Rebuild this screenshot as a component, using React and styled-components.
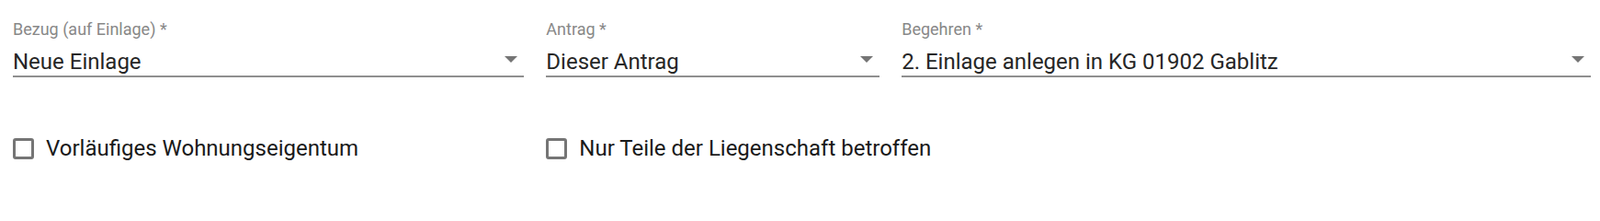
import React from 'react';
import styled, { createGlobalStyle } from 'styled-components';

const GlobalStyle = createGlobalStyle`
  html, body {
    margin: 0;
    padding: 0;
    background: #fff;
  }
  body {
    font-family: Roboto, "Liberation Sans", Arial, sans-serif;
    color: rgba(0, 0, 0, 0.87);
    overflow: hidden;
  }
`;

const Page = styled.div`
  width: 1741px;
  padding-top: 21px;
  box-sizing: border-box;
`;

const Row = styled.div`
  display: flex;
  width: 100%;
  margin-left: -10px;
  margin-top: ${(p) => p.$top || 0}px;
`;

const Cell = styled.div`
  box-sizing: border-box;
  flex: 0 0 ${(p) => (p.$span / 9) * 100}%;
  max-width: ${(p) => (p.$span / 9) * 100}%;
  padding-left: 24px;
`;

const Field = styled.div`
  display: flex;
  flex-direction: column;
`;

const Label = styled.label`
  font-size: 18px;
  line-height: 21px;
  height: 21px;
  color: #888;
  white-space: nowrap;
`;

const SelectBox = styled.div`
  display: flex;
  align-items: flex-start;
  margin-top: 11px;
  height: 29px;
  border-bottom: 2px solid #8f8f8f;
`;

const Value = styled.div`
  flex: 1;
  font-size: 24px;
  line-height: 28px;
  color: #262626;
  white-space: nowrap;
  overflow: hidden;
`;

const Arrow = styled.svg`
  flex: none;
  width: 14px;
  height: 7px;
  margin: 8px 7px 0 0;
  fill: #757575;
`;

const CheckItem = styled.label`
  display: flex;
  align-items: center;
  gap: 13px;
  height: 28px;
  cursor: pointer;
`;

const Box = styled.span`
  flex: none;
  width: 23px;
  height: 23px;
  box-sizing: border-box;
  border: 3px solid #757575;
  border-radius: 3px;
`;

const CheckText = styled.span`
  font-size: 24px;
  line-height: 28px;
  color: #1a1a1a;
  white-space: nowrap;
`;

function SelectField({ label, value }) {
  return (
    <Field>
      <Label>{label}</Label>
      <SelectBox>
        <Value>{value}</Value>
        <Arrow viewBox="0 0 14 7">
          <path d="M0 0 L7 7 L14 0 Z" />
        </Arrow>
      </SelectBox>
    </Field>
  );
}

function Check({ children }) {
  return (
    <CheckItem>
      <Box />
      <CheckText>{children}</CheckText>
    </CheckItem>
  );
}

export default function App() {
  return (
    <Page>
      <GlobalStyle />
      <Row>
        <Cell $span={3}>
          <SelectField label="Bezug (auf Einlage) *" value="Neue Einlage" />
        </Cell>
        <Cell $span={2}>
          <SelectField label="Antrag *" value="Dieser Antrag" />
        </Cell>
        <Cell $span={4}>
          <SelectField label="Begehren *" value="2. Einlage anlegen in KG 01902 Gablitz" />
        </Cell>
      </Row>
      <Row $top={63}>
        <Cell $span={3}>
          <Check>Vorläufiges Wohnungseigentum</Check>
        </Cell>
        <Cell $span={2}>
          <Check>Nur Teile der Liegenschaft betroffen</Check>
        </Cell>
      </Row>
    </Page>
  );
}
